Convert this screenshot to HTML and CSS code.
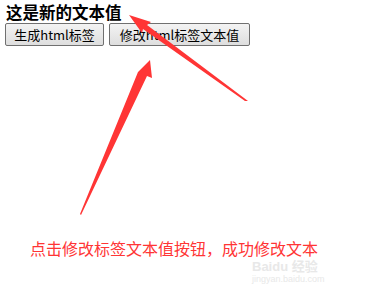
FILE: index.html
```html
<!DOCTYPE html>
<html>
<head>
<meta charset="utf-8">
<link rel="stylesheet" href="styles.css">
</head>
<body>
<div class="page">
  <div class="title">这是新的文本值</div>
  <div class="buttons">
    <button class="btn btn-gen">生成html标签</button>
    <button class="btn btn-mod">修改html标签文本值</button>
  </div>
  <div class="caption">点击修改标签文本值按钮，成功修改文本</div>
  <div class="watermark">
    <div class="wm-logo">Bai<span class="wm-paw">du</span> 经验</div>
    <div class="wm-url">jingyan.baidu.com</div>
  </div>
  <svg class="arrows" width="366" height="289" viewBox="0 0 366 289">
    <polygon points="129,15 151,22 147,25 248,101 245,101 143,29 142,33" fill="#ff3535"/>
    <polygon points="150,60 152,78 147,76 81,215 80,214 138,72 137,73" fill="#ff3535"/>
  </svg>
</div>
</body>
</html>
```
FILE: styles.css
```css
html, body {
  margin: 0;
  padding: 0;
  background: #ffffff;
}
.page {
  position: relative;
  width: 366px;
  height: 289px;
  overflow: hidden;
  font-family: "Noto Sans CJK SC", "Liberation Sans", sans-serif;
}
.title {
  padding: 3px 0 0 6px;
  font-size: 16.5px;
  font-weight: bold;
  line-height: 19px;
  color: #000;
}
.buttons {
  display: flex;
  gap: 5px;
  padding-left: 5px;
  margin-top: 1px;
}
.btn {
  height: 23px;
  padding: 0;
  white-space: nowrap;
  font-family: "Noto Sans CJK SC", "Liberation Sans", sans-serif;
  font-size: 13px;
  line-height: 20px;
  color: #000;
  background: linear-gradient(#f3f3f3, #dedede);
  border: 1px solid #707070;
  border-radius: 2px;
}
.btn-gen { width: 99px; }
.btn-mod { width: 141px; }
.caption {
  margin: 194px 0 0 30px;
  font-size: 16px;
  line-height: 16px;
  color: #ff3535;
  white-space: nowrap;
}
.watermark {
  position: absolute;
  left: 252px;
  top: 259px;
  color: #e8e8e8;
  font-family: "Liberation Sans", "Noto Sans CJK SC", sans-serif;
}
.wm-logo {
  font-size: 13px;
  font-weight: bold;
  line-height: 15px;
}
.wm-url {
  font-size: 9px;
  line-height: 11px;
}
.arrows {
  position: absolute;
  left: 0;
  top: 0;
}
```
